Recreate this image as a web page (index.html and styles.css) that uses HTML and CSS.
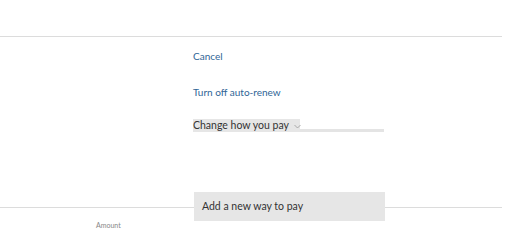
FILE: index.html
```html
<!DOCTYPE html>
<html>
<head>
<meta charset="utf-8">
<link rel="stylesheet" href="styles.css">
</head>
<body>
<div class="page">
  <div class="rule"></div>
  <div class="actions">
    <a class="link cancel">Cancel</a>
    <a class="link renew">Turn off auto-renew</a>
    <div class="pay-row">
      <div class="pay-select">Change how you pay <span class="chev"><svg width="7" height="5" viewBox="0 0 7 5"><path d="M0.5 1 L3.5 4 L6.5 1" fill="none" stroke="#9a9a9a" stroke-width="0.8"/></svg></span></div>
      <div class="pay-line"></div>
    </div>
  </div>
  <div class="bottom-row">
    <div class="add-box">Add a new way to pay</div>
  </div>
  <div class="amount">Amount</div>
</div>
</body>
</html>
```
FILE: styles.css
```css
html, body {
  margin: 0;
  padding: 0;
  background: #ffffff;
}
.page {
  width: 520px;
  height: 231px;
  overflow: hidden;
  font-family: Lato, "Open Sans", "Liberation Sans", sans-serif;
  padding-top: 36px;
  box-sizing: border-box;
}
.rule {
  width: 502px;
  height: 1px;
  background: #dcdcdc;
}
.actions {
  margin-left: 193px;
  display: flex;
  flex-direction: column;
  align-items: flex-start;
}
.link {
  color: #2f6596;
  font-size: 10px;
  line-height: 14px;
}
.cancel {
  margin-top: 12px;
}
.renew {
  margin-top: 22px;
}
.pay-row {
  margin-top: 20px;
  display: flex;
  align-items: flex-end;
}
.pay-select {
  background: #e6e6e6;
  color: #333333;
  font-size: 10.5px;
  line-height: 13px;
  height: 13px;
  width: 107px;
  box-sizing: border-box;
  white-space: nowrap;
  display: flex;
  align-items: center;
  gap: 5px;
}
.chev {
  display: flex;
  align-items: center;
  padding-top: 1px;
}
.pay-line {
  width: 84px;
  height: 3px;
  background: #e4e4e4;
}
.bottom-row {
  margin-top: 60px;
  width: 502px;
  height: 29px;
  background: linear-gradient(to bottom, transparent 15px, #dcdcdc 15px, #dcdcdc 16px, transparent 16px);
}
.add-box {
  margin-left: 194px;
  width: 191px;
  height: 29px;
  box-sizing: border-box;
  background: #e6e6e6;
  color: #333333;
  font-size: 10.5px;
  line-height: 29px;
  padding-left: 8px;
}
.amount {
  margin-left: 96px;
  font-size: 7px;
  line-height: 9px;
  color: #888888;
}
```
